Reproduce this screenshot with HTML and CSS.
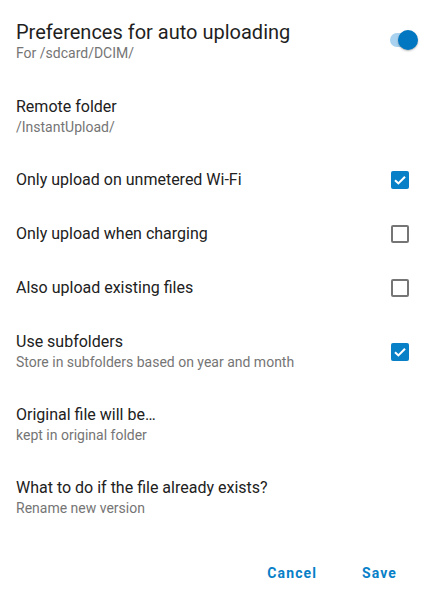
FILE: index.html
```html
<!DOCTYPE html>
<html>
<head>
<meta charset="utf-8">
<link rel="stylesheet" href="styles.css">
</head>
<body>
<div class="dialog">
  <div class="header">
    <div class="texts">
      <div class="h-title">Preferences for auto uploading</div>
      <div class="h-sub">For /sdcard/DCIM/</div>
    </div>
    <div class="switch"><div class="track"></div><div class="thumb"></div></div>
  </div>

  <div class="row two">
    <div class="texts"><div class="title">Remote folder</div><div class="sub">/InstantUpload/</div></div>
  </div>
  <div class="row one">
    <div class="texts"><div class="title">Only upload on unmetered Wi-Fi</div></div>
    <div class="cb on"><svg viewBox="0 0 18 18" width="18" height="18"><path d="M4 9.2 L7.4 12.4 L14 5.8" fill="none" stroke="#fff" stroke-width="2.1"/></svg></div>
  </div>
  <div class="row one">
    <div class="texts"><div class="title">Only upload when charging</div></div>
    <div class="cb off"></div>
  </div>
  <div class="row one">
    <div class="texts"><div class="title">Also upload existing files</div></div>
    <div class="cb off"></div>
  </div>
  <div class="row two">
    <div class="texts"><div class="title">Use subfolders</div><div class="sub">Store in subfolders based on year and month</div></div>
    <div class="cb on"><svg viewBox="0 0 18 18" width="18" height="18"><path d="M4 9.2 L7.4 12.4 L14 5.8" fill="none" stroke="#fff" stroke-width="2.1"/></svg></div>
  </div>
  <div class="row two">
    <div class="texts"><div class="title">Original file will be…</div><div class="sub">kept in original folder</div></div>
  </div>
  <div class="row two">
    <div class="texts"><div class="title">What to do if the file already exists?</div><div class="sub">Rename new version</div></div>
  </div>

  <div class="actions">
    <button class="btn">Cancel</button>
    <button class="btn">Save</button>
  </div>
</div>
</body>
</html>
```
FILE: styles.css
```css
html, body {
  margin: 0;
  padding: 0;
  background: #ffffff;
}
body {
  font-family: Roboto, "Noto Sans", sans-serif;
  color: #212121;
}
.dialog {
  width: 440px;
}
.header {
  display: flex;
  align-items: flex-start;
  padding: 20px 20px 18px 16px;
}
.texts {
  flex: 1;
}
.h-title {
  font-size: 20px;
  line-height: 24px;
  color: #1f1f1f;
}
.h-sub {
  font-size: 14px;
  line-height: 18px;
  color: #757575;
}
.switch {
  position: relative;
  width: 32px;
  height: 24px;
  margin-top: 8px;
}
.track {
  position: absolute;
  left: 2px;
  top: 5px;
  width: 26px;
  height: 14px;
  border-radius: 7px;
  background: #a8d2ef;
}
.thumb {
  position: absolute;
  left: 10px;
  top: 2px;
  width: 20px;
  height: 20px;
  border-radius: 50%;
  background: #0277c1;
  box-shadow: 0 1px 2px rgba(0,0,0,0.3);
}
.row {
  display: flex;
  align-items: center;
  padding: 16px 31px 16px 16px;
}
.row.one .title {
  line-height: 22px;
}
.title {
  font-size: 16px;
  line-height: 21px;
  color: #212121;
}
.sub {
  font-size: 14px;
  line-height: 20px;
  color: #757575;
}
.cb {
  width: 18px;
  height: 18px;
  box-sizing: border-box;
  border-radius: 2px;
}
.cb svg {
  display: block;
}
.cb.on {
  background: #0780c8;
}
.cb.off {
  border: 2px solid #757575;
}
.actions {
  display: flex;
  justify-content: flex-end;
  gap: 29px;
  padding: 26px 35px 0 0;
}
.btn {
  background: none;
  border: none;
  font-family: Roboto, sans-serif;
  font-weight: 700;
  font-size: 14px;
  letter-spacing: 1.1px;
  color: #0780c8;
  padding: 4px 8px;
  line-height: 18px;
}
```
